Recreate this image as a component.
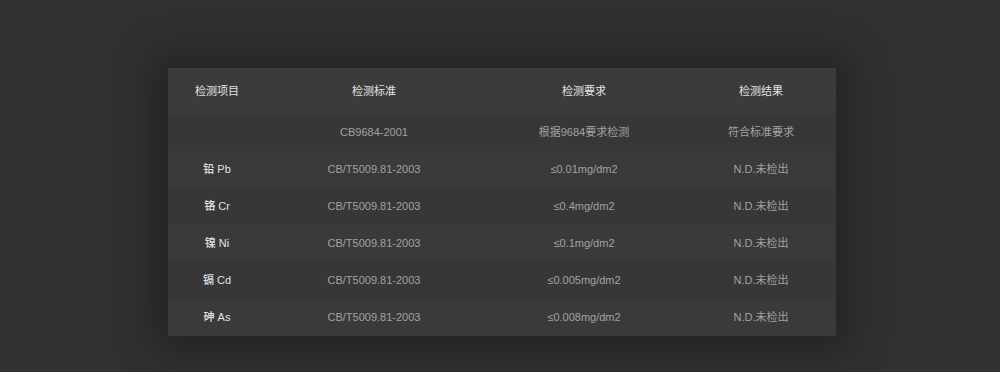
import React from 'react';

const rows = [
    { item: '', standard: 'CB9684-2001', req: '根据9684要求检测', result: '符合标准要求' },
    { item: '铅 Pb', standard: 'CB/T5009.81-2003', req: '≤0.01mg/dm2', result: 'N.D.未检出' },
    { item: '铬 Cr', standard: 'CB/T5009.81-2003', req: '≤0.4mg/dm2', result: 'N.D.未检出' },
    { item: '镍 Ni', standard: 'CB/T5009.81-2003', req: '≤0.1mg/dm2', result: 'N.D.未检出' },
    { item: '镉 Cd', standard: 'CB/T5009.81-2003', req: '≤0.005mg/dm2', result: 'N.D.未检出' },
    { item: '砷 As', standard: 'CB/T5009.81-2003', req: '≤0.008mg/dm2', result: 'N.D.未检出' },
];

const cols = 'grid grid-cols-[98px_216px_204px_150px] items-center text-center';

const App = () => {
    return (
        <div className="w-[1000px] h-[372px] bg-[#313131] pt-[68px] pl-[168px] font-['Liberation_Sans','Noto_Sans_CJK_SC',sans-serif] text-[11px]">
            <div className="w-[668px] bg-[#383838] shadow-[0_0_40px_14px_rgba(0,0,0,0.3)]">
                <div className={`${cols} h-[46px] bg-[#3b3b3b] text-[#e4e4e4]`}>
                    <div>检测项目</div>
                    <div>检测标准</div>
                    <div>检测要求</div>
                    <div>检测结果</div>
                </div>
                {rows.map((r, idx) => (
                    <div
                        key={idx}
                        className={`${cols} h-[37px] ${idx % 2 === 0 ? 'bg-[#373737]' : 'bg-[#3a3a3a]'}`}
                    >
                        <div className="text-[#e2e2e2] font-medium">{r.item}</div>
                        <div className="text-[#a2a2a2]">{r.standard}</div>
                        <div className="text-[#a2a2a2]">{r.req}</div>
                        <div className="text-[#a2a2a2]">{r.result}</div>
                    </div>
                ))}
            </div>
        </div>
    );
};

export default App;
